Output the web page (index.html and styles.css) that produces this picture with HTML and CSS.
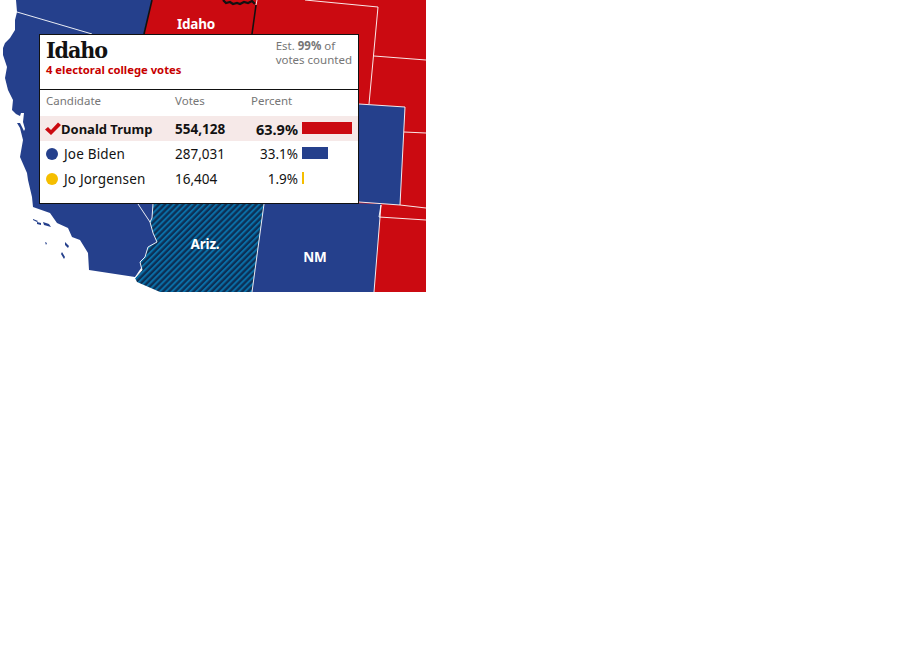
FILE: index.html
```html
<!DOCTYPE html>
<html lang="en">
<head>
<meta charset="utf-8">
<title>Idaho results</title>
<link rel="stylesheet" href="styles.css">
</head>
<body>
<div class="map">
  <svg class="map-art" width="426" height="292" viewBox="0 0 426 292" aria-hidden="true">
    <defs>
      <pattern id="hatch" width="4.3" height="4.3" patternUnits="userSpaceOnUse" patternTransform="rotate(-45)">
        <rect width="4.3" height="4.3" fill="#0c2f55"/>
        <rect width="4.3" height="2" fill="#0a6ea6"/>
      </pattern>
    </defs>
    <path class="red" d="M152 0H426V292H200V204H144V33Z"/>
    <path class="blue" d="M16 0L17 12L15 20L15 30L10 38L5 43L3 48L3 55L7 67L5 78L8 90L13 100L12 110L16 114L20 116L21 113L24 113L23 122L25 129L24 131L20 123L17 123L20 128L23 140L20 157L27 173L28 180L32 197L33 207L50 213L57 223L68 228L72 237L80 240L88 253L89 270L135 277L160 240L165 120L144 33L152 0Z"/>
    <path class="blue" d="M359 104L405 107L400 205L359 202Z"/>
    <path class="blue" d="M264 200L381 204L374 292L252 292Z"/>
    <path class="blue" d="M33 219l5 2l-1 1l-4-2z M37 222l4 1v2l-4-1z M43 222l6 2l2 3l-7-2z M45 242l2 1l-1 2z M65 242l4 4l-1 2l-3-3z M62 252l3 5l-1 2l-3-5z"/>
    <path d="M153 204L264 204L252 292L160 292L137 282L135 278L142 270L140 262L145 257L148 247L157 242L153 233L150 222L152 218Z" fill="url(#hatch)"/>
    <path class="border" d="M144 34L152 0M252 34L256 5"/>
    <path class="border thick" d="M223 0L226 3L230 2L233 4L237 3L240 4L244 2L248 3L252 1L255 4"/>
    <path class="line" d="M17 12L92 34M138 204L150 222M153 204L152 218L150 222L153 233L157 242L148 247L145 257L140 262L142 270L135 278M264 204L252 292M381 205L374 292M257 0L256 5M305 0L378 7L369 104M374 56L426 60M404 132L426 133M359 104L405 107L400 205L426 208M359 202L400 205M381 205L379 217L426 220"/>
    <text x="196" y="29" class="state">Idaho</text>
    <text x="205" y="249" class="state">Ariz.</text>
    <text x="315" y="262" class="state">NM</text>
  </svg>
  <section class="card">
    <header class="card-head">
      <div>
        <h1 class="title">Idaho</h1>
        <p class="votes-ec">4 electoral college votes</p>
      </div>
      <p class="counted">Est. <b>99%</b> of<br>votes counted</p>
    </header>
    <div class="row head">
      <span class="c-name">Candidate</span>
      <span class="c-votes">Votes</span>
      <span class="c-pct-head">Percent</span>
    </div>
    <div class="row winner">
      <span class="c-name">
        <svg class="check" width="16" height="13" viewBox="0 0 16 13" aria-hidden="true"><path d="M0 7.5L3 5L6 8L13 0.5L16 3L6 13Z" fill="#cb0a11"/></svg><span class="name-tight">Donald Trump</span>
      </span>
      <span class="c-votes">554,128</span>
      <span class="c-pct pct-win">63.9%</span>
      <span class="bar bar-red" style="width:50px"></span>
    </div>
    <div class="row">
      <span class="c-name"><i class="dot dot-blue"></i><span class="name-wide">Joe Biden</span></span>
      <span class="c-votes">287,031</span>
      <span class="c-pct">33.1%</span>
      <span class="bar bar-blue" style="width:26px"></span>
    </div>
    <div class="row">
      <span class="c-name"><i class="dot dot-yellow"></i><span class="name-wide">Jo Jorgensen</span></span>
      <span class="c-votes">16,404</span>
      <span class="c-pct">1.9%</span>
      <span class="bar bar-yellow" style="width:1.5px"></span>
    </div>
  </section>
</div>
</body>
</html>
```
FILE: styles.css
```css
* { box-sizing: border-box; }
html, body { margin: 0; background: #fff; }
body { font-family: "Noto Sans", "Open Sans", sans-serif; color: #121212; }

.map { position: relative; width: 426px; height: 292px; overflow: hidden; }
.map-art { display: block; }
.red { fill: #cb0a11; }
.blue { fill: #25408c; }
.line { fill: none; stroke: #fff; stroke-width: 1; opacity: .9; }
.border { fill: none; stroke: #111; stroke-width: 1.6; }
.thick { stroke-width: 2.2; }
.state { font: 700 13.5px "Noto Sans", sans-serif; fill: #fff; text-anchor: middle; letter-spacing: -.2px; }

.card { position: absolute; left: 39px; top: 34px; width: 320px; height: 170px; background: #fff; border: 1px solid #111; }
.card-head { display: flex; justify-content: space-between; height: 55px; padding: 2px 6px 0; border-bottom: 1px solid #111; }
.title { margin: 0; font: 700 23px/26px "DejaVu Serif Condensed", "DejaVu Serif", serif; letter-spacing: -1.1px; color: #121212; }
.votes-ec { margin: 0; font-size: 11.25px; line-height: 14px; font-weight: 700; color: #c70000; }
.counted { margin: 2px 0 0; font-size: 11.5px; line-height: 14px; color: #767676; }
.counted b { font-weight: 700; }

.row { display: flex; align-items: center; height: 25px; padding-left: 6px; font-size: 13.5px; }
.row.head { height: 26px; padding-bottom: 6px; font-size: 11.5px; color: #767676; }
.winner { background: #f6e9e8; font-weight: 700; }
.name-tight { font-size: 13px; }
.name-wide { letter-spacing: .18px; }
.pct-win { font-size: 14.5px; }
.c-name { display: flex; align-items: center; width: 129px; white-space: nowrap; }
.c-votes { width: 76px; }
.c-pct { width: 47px; text-align: right; }
.c-pct-head { width: 47px; }
.bar { height: 12px; margin-left: 4px; margin-top: -1px; }
.bar-red { background: #cb0a11; }
.bar-blue { background: #25408c; }
.bar-yellow { background: #f5be00; }
.check { margin: 0 0 0 -1px; flex: none; }
.dot { flex: none; width: 12px; height: 12px; margin-right: 6px; border-radius: 50%; }
.dot-blue { background: #25408c; }
.dot-yellow { background: #f5be00; }
```
